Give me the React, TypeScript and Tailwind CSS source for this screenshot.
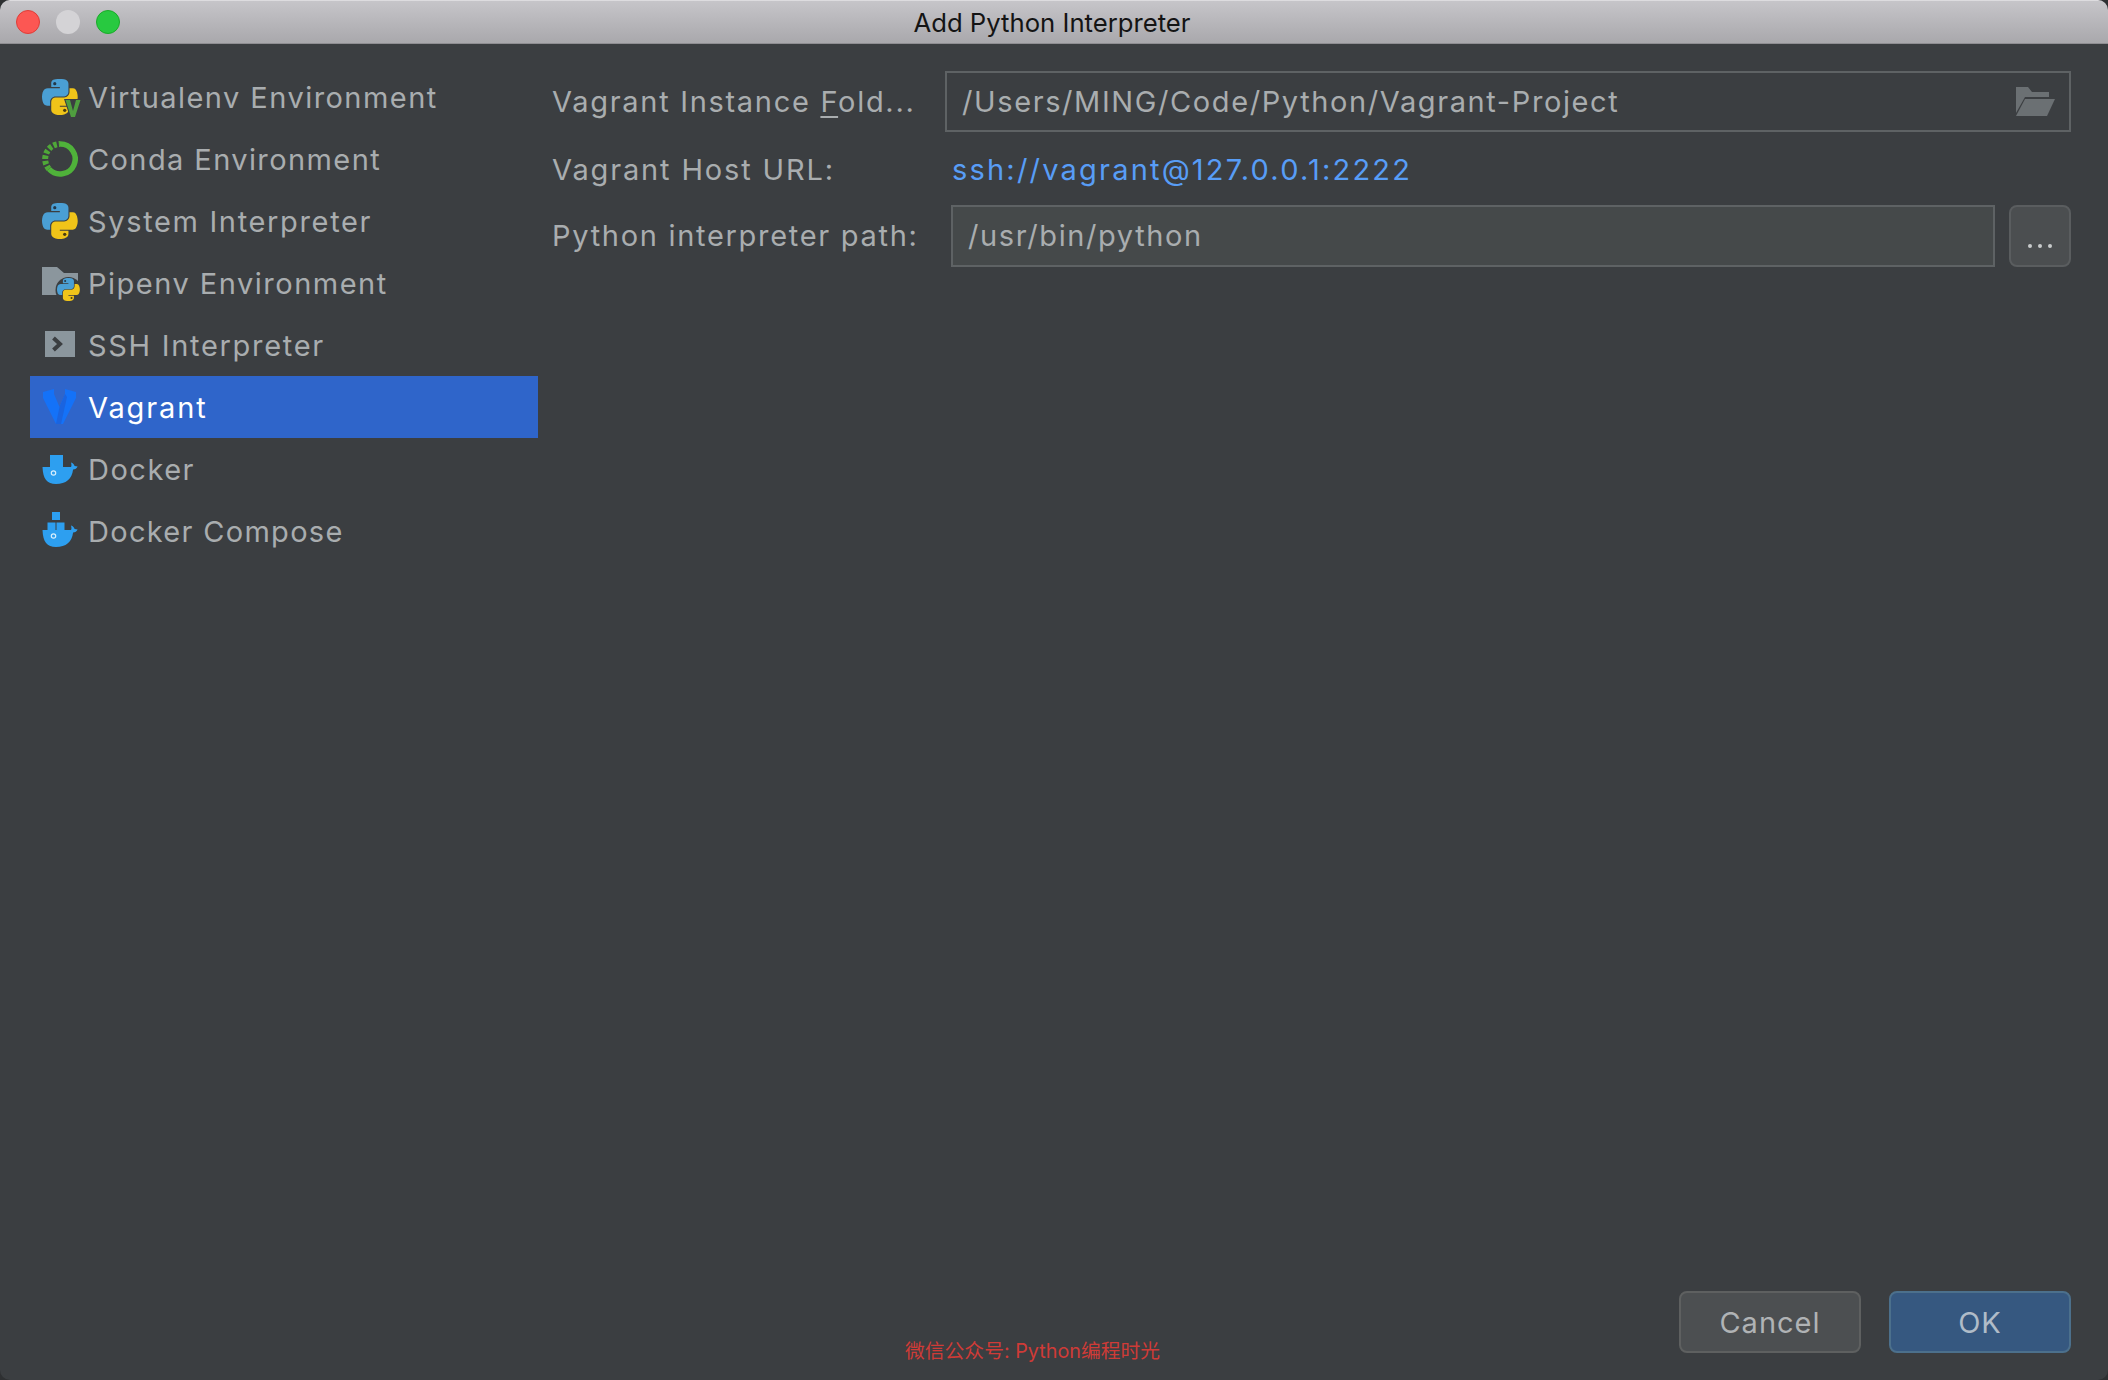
import React from 'react';

// two-snake python logo, source box is about 112 wide, scaled to 36
const PythonLogo = ({ x = 0, y = 0, s = 1 }: { x?: number; y?: number; s?: number }) => (
    <g transform={`translate(${x} ${y}) scale(${s * 0.3214})`}>
        <path fill="#4a9fd4" d="M54.919 0c-4.584.022-8.961.413-12.813 1.095C30.76 3.099 28.7 7.295 28.7 15.032v10.219h26.813v3.406H18.638c-7.793 0-14.616 4.684-16.75 13.594-2.462 10.213-2.571 16.586 0 27.25 1.905 7.938 6.457 13.594 14.25 13.594h9.218v-12.25c0-8.85 7.657-16.656 16.75-16.656h26.782c7.454 0 13.406-6.138 13.406-13.625V15.032c0-7.266-6.13-12.725-13.406-13.936C64.282.328 59.502-.02 54.919 0z" />
        <path fill="#f0c419" d="M85.638 28.657v11.906c0 9.231-7.826 17-16.750 17H42.106c-7.336 0-13.406 6.279-13.406 13.625v25.531c0 7.266 6.319 11.540 13.406 13.625 8.487 2.496 16.626 2.947 26.782 0 6.750-1.954 13.406-5.888 13.406-13.625V86.500H55.513v-3.405H95.700c7.793 0 10.696-5.436 13.406-13.594 2.800-8.400 2.680-16.476 0-27.250-1.926-7.757-5.604-13.594-13.406-13.594H85.638z" />
        <circle cx="39.700" cy="14.500" r="5" fill="#23384a" />
        <circle cx="70.700" cy="97.500" r="5" fill="#4a3c10" />
    </g>
);

const VirtualenvIcon = () => (
    <svg width="40" height="40" viewBox="0 0 40 40">
        <PythonLogo x={0} y={2} />
        <path fill="#3b3e41" d="M22 22h18l-7 18h-5z" />
        <path fill="#4f9e3f" d="M23.500 23h4.500l3 11 3-11h4.500l-5.500 17h-4z" />
    </svg>
);

const CondaIcon = () => (
    <svg width="36" height="38" viewBox="0 0 36 38">
        <path fill="none" stroke="#4fb23a" strokeWidth="5.500" d="M18 4A15 15 0 1 1 7 29" />
        <path fill="none" stroke="#4fa838" strokeWidth="6" strokeDasharray="3.500 2" d="M7 29A15 15 0 0 1 18 4" />
    </svg>
);

const PipenvIcon = () => (
    <svg width="40" height="40" viewBox="0 0 40 40">
        <path fill="#8b969d" d="M0 4h15l7 6h14v22H0z" />
        <circle cx="26.500" cy="27" r="13" fill="#3b3e41" />
        <PythonLogo x={15} y={15} s={0.64} />
    </svg>
);

const SshIcon = () => (
    <svg width="36" height="30" viewBox="0 0 36 30">
        <rect x="3" y="1" width="30" height="26" fill="#8b969d" />
        <path fill="none" stroke="#3b3e41" strokeWidth="4" d="M11.500 8l6.500 6-6.500 6" />
    </svg>
);

const VagrantIcon = () => (
    <svg width="36" height="36" viewBox="0 0 36 36">
        <path fill="#1472f8" d="M1 3l11-3v5l5.500 13L23 5V0l11 3v6L21 35h-7L1 9z" />
        <path fill="#1a64e0" d="M17.500 18L23 5l2 3-6 27h-5z" />
    </svg>
);

const Whale = () => (
    <>
        <path fill="#2d9ff0" d="M.5 14H29c.6-1 .6-2.500 0-4.500 2 .5 3.200 2 3.600 3.500l3 .5c-.8 2-2.500 2.800-4.500 3C30 26 24 31 14 31 5 31 1 26 .5 14z" />
        <circle cx="11.500" cy="20" r="2.200" fill="none" stroke="#d8eefc" strokeWidth="1.200" />
    </>
);

const DockerIcon = () => (
    <svg width="37" height="32" viewBox="0 0 37 32">
        <rect x="8" y="2" width="13" height="12" fill="#2d9ff0" />
        <Whale />
    </svg>
);

const ComposeIcon = () => (
    <svg width="37" height="38" viewBox="0 0 37 38">
        <rect x="10" y="0" width="8" height="8" fill="#2d9ff0" />
        <rect x="5.500" y="10.500" width="8" height="7.500" fill="#2d9ff0" />
        <rect x="14.500" y="10.500" width="8" height="7.500" fill="#2d9ff0" />
        <g transform="translate(0 4)">
            <Whale />
        </g>
    </svg>
);

const items = [
    { name: 'Virtualenv Environment', icon: <VirtualenvIcon />, track: 'tracking-[1.45px]' },
    { name: 'Conda Environment', icon: <CondaIcon />, track: 'tracking-[1.4px]' },
    { name: 'System Interpreter', icon: <svg width="36" height="36" viewBox="0 0 36 36"><PythonLogo /></svg>, track: 'tracking-[1.65px]' },
    { name: 'Pipenv Environment', icon: <PipenvIcon />, track: 'tracking-[1.5px]' },
    { name: 'SSH Interpreter', icon: <SshIcon />, track: 'tracking-[1.7px]' },
    { name: 'Vagrant', icon: <VagrantIcon />, track: 'tracking-[1.9px]', selected: true },
    { name: 'Docker', icon: <DockerIcon />, track: 'tracking-[1.5px]' },
    { name: 'Docker Compose', icon: <ComposeIcon />, track: 'tracking-[1.3px]' },
];

const App: React.FC = () => {
    return (
        <div className="w-[2108px] h-[1380px] bg-[#2e3032]">
            <div className="w-full h-full overflow-hidden rounded-[10px] bg-[#3b3e41] flex flex-col font-['Inter',sans-serif] text-[#a9adaf]">
                {/* Title bar */}
                <div className="h-[44px] flex-none grid grid-cols-[1fr_auto_1fr] items-center bg-gradient-to-b from-[#c6c5c9] to-[#a9a8ac] border-t border-t-[#dddcdf] border-b border-b-[#8f8e92]">
                    <div className="flex items-center gap-[16px] pl-[16px]">
                        <span className="w-[24px] h-[24px] rounded-full bg-[#fc5753] border border-[#df3d38]" />
                        <span className="w-[24px] h-[24px] rounded-full bg-[#d4d3d6]" />
                        <span className="w-[24px] h-[24px] rounded-full bg-[#28c940] border border-[#1aab29]" />
                    </div>
                    <div className="text-[25.700px] text-[#141414] pr-[4px] pt-[2px]">Add Python Interpreter</div>
                    <div />
                </div>

                {/* Main area */}
                <div className="flex-1 flex">
                    <div className="w-[538px] flex-none pl-[30px] pt-[22px]">
                        {items.map((item) => (
                            <div
                                key={item.name}
                                className={`h-[62px] flex items-center text-[29px] ${item.track} ${item.selected ? 'bg-[#2f65ca] text-white' : ''}`}
                            >
                                <div className="w-[58px] flex-none pl-[12px] flex items-center">{item.icon}</div>
                                <span className="pt-[2px]">{item.name}</span>
                            </div>
                        ))}
                    </div>

                    <div className="flex-1 pl-[14px] pr-[37px] pt-[27px] text-[29px] tracking-[1.7px]">
                        <div className="flex items-center h-[61px]">
                            <div className="w-[393px] flex-none whitespace-nowrap">Vagrant Instance <span className="underline underline-offset-4">F</span>old...</div>
                            <div className="flex-1 h-[61px] border-2 border-[#5e6264] flex items-center justify-between pl-[15px] pr-[14px] tracking-[1.6px]">
                                <span>/Users/MING/Code/Python/Vagrant-Project</span>
                                <svg width="39" height="30" viewBox="0 0 39 30">
                                    <path fill="#6b7073" d="M0 0h12l4 5h17v5H9L0 26z" />
                                    <path fill="#6b7073" d="M9 12h30l-8 17H0z" />
                                </svg>
                            </div>
                        </div>
                        <div className="flex items-center h-[67px] mt-[4px]">
                            <div className="w-[400px] flex-none tracking-[1.85px]">Vagrant Host URL:</div>
                            <span className="text-[#589df6] tracking-[2.200px]">ssh://vagrant@127.0.0.1:2222</span>
                        </div>
                        <div className="flex items-center h-[62px] mt-[2px]">
                            <div className="w-[399px] flex-none whitespace-nowrap">Python interpreter path:</div>
                            <div className="w-[1044px] flex-none h-[62px] bg-[#45494a] border-2 border-[#5e6264] flex items-center pl-[15px] tracking-[1.6px]">/usr/bin/python</div>
                            <div className="ml-[14px] w-[62px] h-[62px] rounded-[8px] bg-[#4b4e50] border-2 border-[#5a5d5f] flex items-end justify-center pb-[17px] gap-[6px]">
                                <span className="w-[4px] h-[4px] rounded-full bg-[#c8cacb]" />
                                <span className="w-[4px] h-[4px] rounded-full bg-[#c8cacb]" />
                                <span className="w-[4px] h-[4px] rounded-full bg-[#c8cacb]" />
                            </div>
                        </div>
                    </div>
                </div>

                {/* Footer */}
                <div className="flex-none h-[89px] flex items-start pr-[37px] text-[29px] tracking-[1px]">
                    <div className="ml-[905px] mt-[46px] text-[19.800px] tracking-normal text-[#cf3b37] font-['Inter','Noto_Sans_CJK_SC',sans-serif] whitespace-nowrap">微信公众号: Python编程时光</div>
                    <div className="ml-auto flex gap-[28px]">
                        <button className="w-[182px] h-[62px] pt-[2px] rounded-[8px] bg-[#4c4f51] border-2 border-[#5e6060] text-[#b0b3b5]">Cancel</button>
                        <button className="w-[182px] h-[62px] pt-[2px] rounded-[8px] bg-[#365880] border-2 border-[#4c708c] text-[#b0bcc8]">OK</button>
                    </div>
                </div>
            </div>
        </div>
    );
};

export default App;
